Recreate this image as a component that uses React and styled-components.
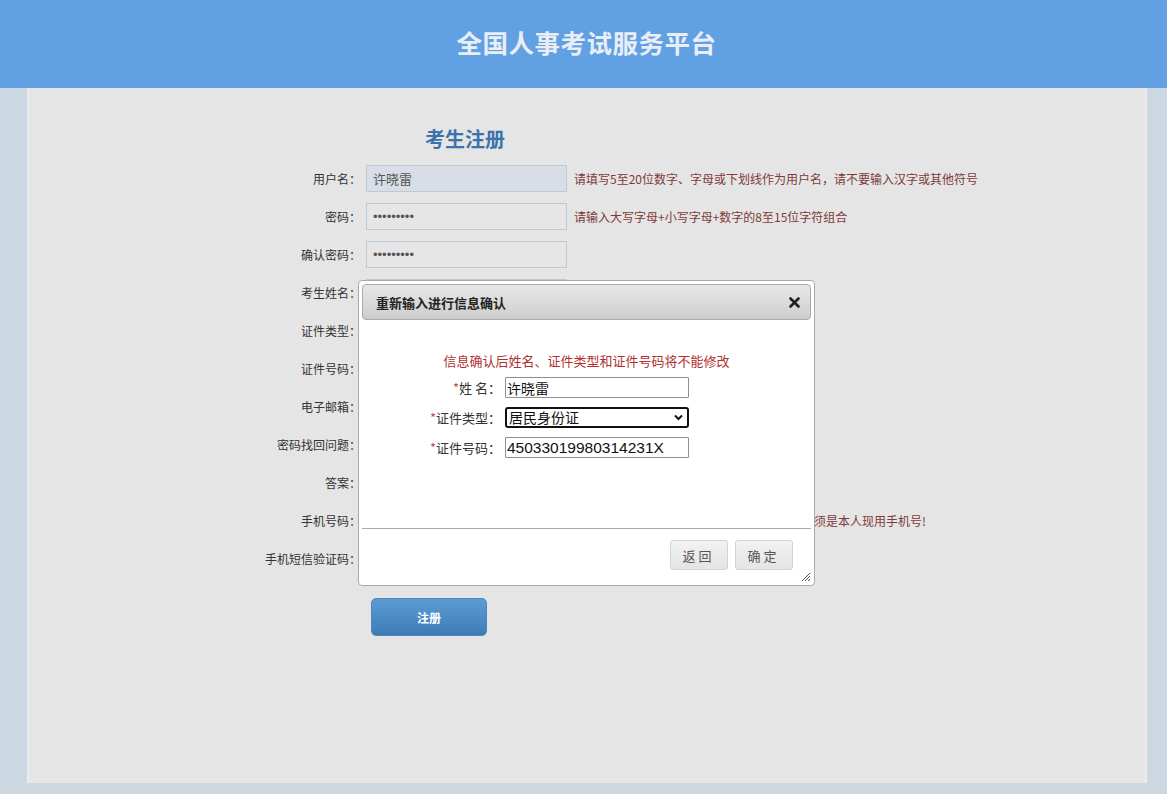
import React from 'react';
import styled, { createGlobalStyle } from 'styled-components';

const GlobalStyle = createGlobalStyle`
  html, body {
    margin: 0;
    padding: 0;
    background: #cbd8e2;
  }
  body {
    font-family: "Microsoft YaHei", "Noto Sans CJK SC", sans-serif;
    color: #333;
  }
`;

const Header = styled.header`
  height: 88px;
  background: #62a0e4;
  display: flex;
  align-items: center;
  justify-content: center;
  padding-left: 6px;
`;

const SiteTitle = styled.h1`
  margin: 0 0 4px;
  font-size: 25.5px;
  font-weight: bold;
  color: #e9eef6;
  letter-spacing: 0.5px;
  line-height: 34px;
`;

const Panel = styled.main`
  position: relative;
  box-sizing: border-box;
  margin-left: 27px;
  width: 1120px;
  height: 695px;
  background: #e5e5e5;
  border-left: 2px solid #ececec;
  border-right: 2px solid #ececec;
  padding: 37px 0 0 212px;
`;

const FormTitle = styled.h2`
  margin: 0 0 12px 184px;
  font-size: 20px;
  line-height: 28px;
  font-weight: bold;
  color: #3b72ab;
`;

const Row = styled.div`
  display: flex;
  align-items: center;
  height: 27px;
  margin-bottom: 11px;
`;

const Label = styled.label`
  width: 120px;
  margin-right: 5px;
  text-align: right;
  font-size: 12px;
  color: #333;
`;

const TextInput = styled.input`
  box-sizing: border-box;
  width: 201px;
  height: 27px;
  margin: 0;
  padding: 0 6px;
  border: 1px solid #b9cbd9;
  background: ${(p) => (p.$filled ? '#d8dde6' : '#e6e6e6')};
  font-family: ${(p) => (p.type === 'password' ? '"Liberation Sans", sans-serif' : 'inherit')};
  font-size: 13px;
  color: #555;
  outline: none;
`;

const Hint = styled.span`
  margin-left: 7px;
  font-size: 12px;
  color: #7f3a3a;
  white-space: nowrap;
`;

const SubmitButton = styled.button`
  margin: 15px 0 0 130px;
  width: 116px;
  height: 38px;
  border: 1px solid #4a86c0;
  border-radius: 5px;
  background: linear-gradient(#5d9bd4, #3e7cb8);
  color: #fff;
  font-family: inherit;
  font-size: 12px;
  font-weight: bold;
`;

const Dialog = styled.div`
  position: absolute;
  left: 329px;
  top: 192px;
  width: 457px;
  height: 306px;
  box-sizing: border-box;
  padding: 3px;
  background: #fff;
  border: 1px solid #aaa;
  border-radius: 4px;
  display: flex;
  flex-direction: column;
  z-index: 10;
`;

const TitleBar = styled.div`
  box-sizing: border-box;
  height: 36px;
  padding: 0 10px 0 13px;
  display: flex;
  align-items: center;
  justify-content: space-between;
  background: linear-gradient(#e8e8e8, #cdcdcd);
  border: 1px solid #aaa;
  border-radius: 4px;
  font-size: 13px;
  font-weight: bold;
  color: #222;
`;

const CloseButton = styled.span`
  display: flex;
  width: 12px;
  height: 12px;
  align-items: center;
  justify-content: center;
`;

const DialogBody = styled.div`
  height: 208px;
  box-sizing: border-box;
  padding-top: 32px;
`;

const Notice = styled.p`
  margin: 0 0 7px;
  text-align: center;
  font-size: 13px;
  line-height: 18px;
  color: #b03030;
`;

const FieldRow = styled.div`
  display: flex;
  align-items: center;
  height: 21px;
  margin-bottom: 9px;
  padding-left: 39px;
`;

const FieldLabel = styled.label`
  width: 100px;
  margin-right: 4px;
  text-align: right;
  font-size: 13px;
  color: #333;
  white-space: nowrap;
`;

const Star = styled.span`
  color: #c0504d;
`;

const FieldInput = styled.input`
  box-sizing: border-box;
  width: 184px;
  height: 21px;
  margin: 0;
  padding: 0 1px;
  border: 1px solid #8f8f8f;
  border-radius: 1px;
  font-family: ${(p) => (p.$wide ? '"Liberation Sans", sans-serif' : 'inherit')};
  font-size: ${(p) => (p.$wide ? '15.5px' : '14px')};
  color: #111;
`;

const SelectWrap = styled.div`
  position: relative;
  width: 184px;
  height: 21px;
`;

const FieldSelect = styled.select`
  display: block;
  appearance: none;
  box-sizing: border-box;
  width: 100%;
  height: 21px;
  margin: 0;
  padding: 0 0 0 2px;
  border: 2px solid #111;
  border-radius: 3px;
  background: #fff;
  font-family: inherit;
  font-size: 14px;
  line-height: 17px;
  color: #111;
  outline: none;
`;

const Chevron = styled.svg`
  position: absolute;
  right: 6px;
  top: 7px;
  pointer-events: none;
`;

const ButtonPane = styled.div`
  position: relative;
  flex: 1;
  display: flex;
  justify-content: flex-end;
  align-items: flex-start;
  gap: 7px;
  padding: 11px 18px 0 0;
  border-top: 1px solid #aaa;
`;

const PaneButton = styled.button`
  width: 58px;
  height: 30px;
  border: 1px solid #d3d3d3;
  border-radius: 3px;
  background: linear-gradient(#f2f2f2, #e4e4e4);
  font-family: inherit;
  font-size: 13px;
  letter-spacing: 3px;
  color: #555;
  padding-left: 5px;
`;

const Grip = styled.svg`
  position: absolute;
  right: 0;
  bottom: 0;
`;

export default function App() {
  return (
    <>
      <GlobalStyle />
      <Header>
        <SiteTitle>全国人事考试服务平台</SiteTitle>
      </Header>
      <Panel>
        <FormTitle>考生注册</FormTitle>
        <Row>
          <Label>用户名：</Label>
          <TextInput $filled defaultValue="许晓雷" />
          <Hint>请填写5至20位数字、字母或下划线作为用户名，请不要输入汉字或其他符号</Hint>
        </Row>
        <Row>
          <Label>密码：</Label>
          <TextInput type="password" defaultValue="Abc123456" />
          <Hint>请输入大写字母+小写字母+数字的8至15位字符组合</Hint>
        </Row>
        <Row>
          <Label>确认密码：</Label>
          <TextInput type="password" defaultValue="Abc123456" />
        </Row>
        <Row>
          <Label>考生姓名：</Label>
          <TextInput />
        </Row>
        <Row>
          <Label>证件类型：</Label>
          <TextInput />
        </Row>
        <Row>
          <Label>证件号码：</Label>
          <TextInput />
        </Row>
        <Row>
          <Label>电子邮箱：</Label>
          <TextInput />
        </Row>
        <Row>
          <Label>密码找回问题：</Label>
          <TextInput />
        </Row>
        <Row>
          <Label>答案：</Label>
          <TextInput />
        </Row>
        <Row>
          <Label>手机号码：</Label>
          <TextInput />
          <Hint>用于接收短信验证码及找回密码的手机号，必须是本人现用手机号!</Hint>
        </Row>
        <Row>
          <Label>手机短信验证码：</Label>
          <TextInput />
        </Row>
        <SubmitButton>注册</SubmitButton>

        <Dialog>
          <TitleBar>
            <span>重新输入进行信息确认</span>
            <CloseButton>
              <svg width="11" height="11" viewBox="0 0 11 11">
                <path d="M1.5 1.5 L9.5 9.5 M9.5 1.5 L1.5 9.5" stroke="#222" strokeWidth="2.6" strokeLinecap="round" />
              </svg>
            </CloseButton>
          </TitleBar>
          <DialogBody>
            <Notice>信息确认后姓名、证件类型和证件号码将不能修改</Notice>
            <FieldRow>
              <FieldLabel><Star>*</Star>姓 名：</FieldLabel>
              <FieldInput defaultValue="许晓雷" />
            </FieldRow>
            <FieldRow>
              <FieldLabel><Star>*</Star>证件类型：</FieldLabel>
              <SelectWrap>
                <FieldSelect defaultValue="id">
                  <option value="id">居民身份证</option>
                </FieldSelect>
                <Chevron width="9" height="7" viewBox="0 0 9 7">
                  <path d="M1 1.5 L4.5 5 L8 1.5" fill="none" stroke="#111" strokeWidth="2" />
                </Chevron>
              </SelectWrap>
            </FieldRow>
            <FieldRow>
              <FieldLabel><Star>*</Star>证件号码：</FieldLabel>
              <FieldInput $wide defaultValue="45033019980314231X" />
            </FieldRow>
          </DialogBody>
          <ButtonPane>
            <PaneButton>返回</PaneButton>
            <PaneButton>确定</PaneButton>
            <Grip width="11" height="11" viewBox="0 0 11 11">
              <path d="M10 2 L2 10 M10 5 L5 10 M10 8 L8 10" stroke="#555" strokeWidth="1" />
            </Grip>
          </ButtonPane>
        </Dialog>
      </Panel>
    </>
  );
}
